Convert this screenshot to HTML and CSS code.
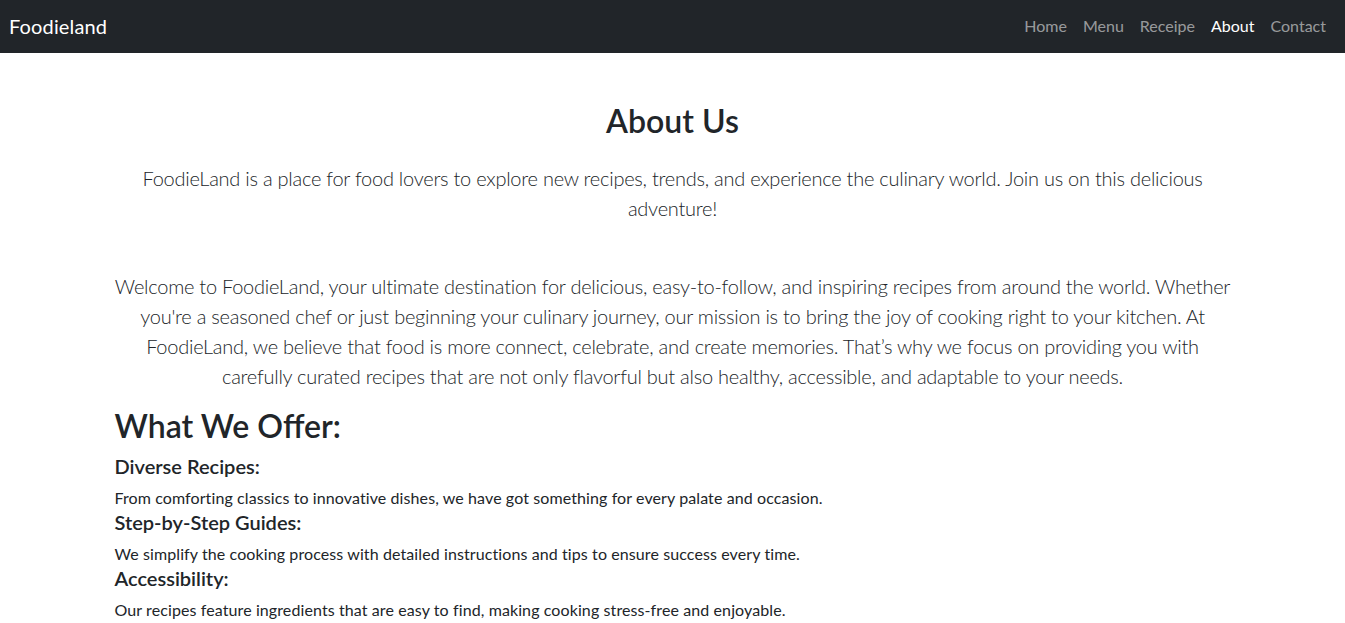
FILE: index.html
```html
<!DOCTYPE html>
<html lang="en">
<head>
<meta charset="utf-8">
<title>Foodieland - About</title>
<link rel="stylesheet" href="styles.css">
</head>
<body>
<nav class="navbar">
  <a class="brand" href="#">Foodieland</a>
  <ul class="nav">
    <li><a class="nav-link" href="#">Home</a></li>
    <li><a class="nav-link" href="#">Menu</a></li>
    <li><a class="nav-link" href="#">Receipe</a></li>
    <li><a class="nav-link active" href="#">About</a></li>
    <li><a class="nav-link" href="#">Contact</a></li>
  </ul>
</nav>
<main class="container">
  <section class="intro">
    <h2 class="title">About Us</h2>
    <p class="lead">FoodieLand is a place for food lovers to explore new recipes, trends, and experience the culinary world. Join us on this delicious adventure!</p>
  </section>
  <section class="story">
    <p class="lead">Welcome to FoodieLand, your ultimate destination for delicious, easy-to-follow, and inspiring recipes from around the world. Whether you're a seasoned chef or just beginning your culinary journey, our mission is to bring the joy of cooking right to your kitchen. At FoodieLand, we believe that food is more connect, celebrate, and create memories. That’s why we focus on providing you with carefully curated recipes that are not only flavorful but also healthy, accessible, and adaptable to your needs.</p>
  </section>
  <section class="offer">
    <h2 class="offer-title">What We Offer:</h2>
    <h5>Diverse Recipes:</h5>
    <p>From comforting classics to innovative dishes, we have got something for every palate and occasion.</p>
    <h5>Step-by-Step Guides:</h5>
    <p>We simplify the cooking process with detailed instructions and tips to ensure success every time.</p>
    <h5>Accessibility:</h5>
    <p>Our recipes feature ingredients that are easy to find, making cooking stress-free and enjoyable.</p>
  </section>
</main>
</body>
</html>
```

FILE: styles.css
```css
* { box-sizing: border-box; }
body {
  margin: 0;
  font-family: Lato, "Liberation Sans", sans-serif;
  font-size: 16px;
  line-height: 1.5;
  color: #212529;
  background: #fff;
}
.navbar {
  height: 53px;
  background: #212529;
  display: flex;
  align-items: center;
  justify-content: space-between;
  padding: 0 11px 2px 9px;
}
.brand {
  color: #fff;
  font-size: 20px;
  letter-spacing: 0.15px;
  text-decoration: none;
}
.nav {
  display: flex;
  list-style: none;
  margin: 0;
  padding: 0;
}
.nav-link {
  display: block;
  padding: 8px;
  color: rgba(255,255,255,.55);
  text-decoration: none;
}
.nav-link.active { color: #fff; }
.container {
  width: 1140px;
  margin: 0 auto;
  padding: 0 12px;
}
.intro { text-align: center; padding-top: 49px; }
h2 {
  margin: 0 0 8px;
  font-size: 32px;
  font-weight: 600;
  line-height: 1.2;
}
.title { margin-bottom: 23px; }
.lead {
  font-size: 20px;
  font-weight: 300;
  line-height: 1.5;
  letter-spacing: -0.25px;
  margin: 0;
}
.story { text-align: center; padding-top: 48px; }
.story .lead { margin-bottom: 16px; }
h5 {
  margin: 0 0 8px;
  font-size: 20px;
  font-weight: 600;
  line-height: 1.2;
}
.offer p { margin: 0; letter-spacing: 0.1px; }
```
